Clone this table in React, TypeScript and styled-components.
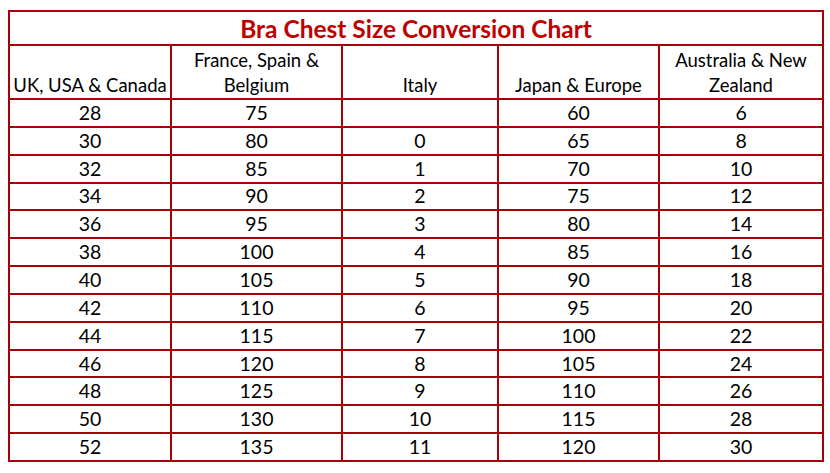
import React from "react";
import styled, { createGlobalStyle } from "styled-components";

const rows: (string | number)[][] = [
  [28, 75, "", 60, 6],
  [30, 80, 0, 65, 8],
  [32, 85, 1, 70, 10],
  [34, 90, 2, 75, 12],
  [36, 95, 3, 80, 14],
  [38, 100, 4, 85, 16],
  [40, 105, 5, 90, 18],
  [42, 110, 6, 95, 20],
  [44, 115, 7, 100, 22],
  [46, 120, 8, 105, 24],
  [48, 125, 9, 110, 26],
  [50, 130, 10, 115, 28],
  [52, 135, 11, 120, 30],
];

const headers = [
  "UK, USA & Canada",
  "France, Spain & Belgium",
  "Italy",
  "Japan & Europe",
  "Australia & New Zealand",
];

const widths = [162, 171, 156, 161, 164];

const GlobalStyle = createGlobalStyle`
  body {
    margin: 0;
    background: #fff;
    font-family: Lato, "Liberation Sans", sans-serif;
    color: #000;
  }
`;

const App: React.FC = () => {
  return (
    <Page>
      <GlobalStyle />
      <Chart>
        <colgroup>
          {widths.map((w, i) => (
            <col key={i} style={{ width: w }} />
          ))}
        </colgroup>
        <thead>
          <tr>
            <Title colSpan={5}>Bra Chest Size Conversion Chart</Title>
          </tr>
          <tr>
            {headers.map((h) => (
              <HeadCell key={h}>{h}</HeadCell>
            ))}
          </tr>
        </thead>
        <tbody>
          {rows.map((r) => (
            <tr key={r[0]}>
              {r.map((v, i) => (
                <Cell key={i}>{v}</Cell>
              ))}
            </tr>
          ))}
        </tbody>
      </Chart>
    </Page>
  );
};

const Page = styled.div`
  padding: 10px 8px 0 8px;
`;

const Chart = styled.table`
  border-collapse: collapse;
  table-layout: fixed;
  width: 814px;
  border: 2px solid #a8000a;
`;

const Title = styled.th`
  height: 32px;
  padding: 0;
  font-size: 24.5px;
  font-weight: 700;
  color: #c00000;
  text-align: center;
  border: 2px solid #a8000a;
`;

const HeadCell = styled.th`
  height: 52px;
  padding: 0 1px;
  font-size: 18.5px;
  font-weight: 400;
  line-height: 25px;
  text-align: center;
  vertical-align: bottom;
  border: 2px solid #a8000a;
`;

const Cell = styled.td`
  height: 25.85px;
  padding: 0;
  font-size: 19.5px;
  line-height: 22px;
  text-align: center;
  border: 2px solid #a8000a;
  border-top-color: #3a0a0a;
`;

export default App;
